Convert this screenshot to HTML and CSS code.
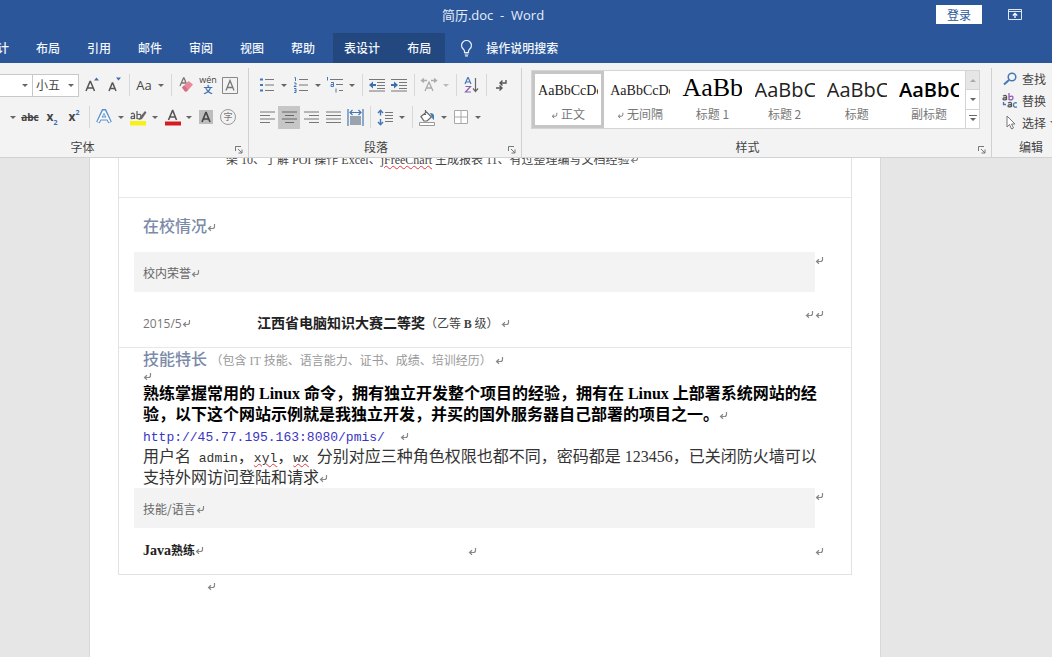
FILE: index.html
```html
<!DOCTYPE html>
<html lang="zh-CN">
<head>
<meta charset="utf-8">
<title>简历.doc - Word</title>
<link rel="stylesheet" href="styles.css">
</head>
<body>
<svg class="defs" aria-hidden="true">
  <symbol id="ret" viewBox="0 0 9 9"><path d="M7.5 1v2.5q0 2-2 2H2M4 3.2L1.500 5.500L4 7.800" fill="none" stroke="currentColor" stroke-width="1.200"/></symbol>
  <symbol id="launch" viewBox="0 0 8 8"><path d="M.5 5V.5H6M3 3l4 4M7 3.500V7H3.500" fill="none" stroke="#777"/></symbol>
</svg>

<header class="titlebar">
  <div class="doc-title">简历.doc&nbsp; -&nbsp; Word</div>
  <button class="login">登录</button>
  <button class="ribbon-opt" aria-label="功能区显示选项"><svg width="14" height="11" viewBox="0 0 14 11"><path d="M.5.5h13v10H.5zM.5 2.500h13" fill="none" stroke="#dfe8f5"/><path d="M7 9V4.500M4.800 6.500L7 4.300l2.200 2.200" fill="none" stroke="#fff" stroke-width="1.300"/></svg></button>
</header>

<nav class="tabs">
  <div class="tab-list">
    <button>设计</button><button>布局</button><button>引用</button><button>邮件</button><button>审阅</button><button>视图</button><button>帮助</button>
  </div>
  <div class="context-tabs"><button>表设计</button><button>布局</button></div>
  <button class="tell-me"><svg width="13" height="17" viewBox="0 0 13 17"><path d="M4.500 12.500V11C4.500 9.500 1.500 8.500 1.500 5.500a5 5 0 0 1 10 0c0 3-3 4-3 5.500v1.500zM4.500 14h4M5 15.800h3" fill="none" stroke="#e6eefa" stroke-width="1.200"/></svg>操作说明搜索</button>
</nav>

<section class="ribbon">
  <div class="group font-group">
    <div class="row">
      <div class="combo font-name"><select aria-label="字体"><option></option></select></div>
      <div class="combo font-size"><select aria-label="字号"><option>小五</option></select></div>
      <button class="tool" aria-label="增大字号"><svg width="16" height="18" viewBox="0 0 16 18"><path d="M2 15L6 5.500h.5L10.500 15M3.500 12h5.500" fill="none" stroke="#555" stroke-width="1.500"/><path d="M10 4.500l2.500-3 2.500 3z" fill="#3b6fb0"/></svg></button>
      <button class="tool" aria-label="减小字号"><svg width="16" height="18" viewBox="0 0 16 18"><path d="M3 15l3.300-8h.4L10 15M4 12.500h5" fill="none" stroke="#555" stroke-width="1.500"/><path d="M10 1.500h5l-2.500 3z" fill="#3b6fb0"/></svg></button>
      <i class="sep"></i>
      <button class="tool aa">Aa</button><button class="drop" aria-label="更改大小写"></button>
      <i class="sep"></i>
      <button class="tool" aria-label="清除格式"><svg width="17" height="18" viewBox="0 0 17 18"><path d="M2 10l3.500-8h.5l2.500 6M3.500 7h4" fill="none" stroke="#777" stroke-width="1.300"/><path d="M4 11.500L10.500 5 15 8.500 9 15.500H7z" fill="#e8899a"/><path d="M4 11.500l2-2 4 4-1.500 2H7z" fill="#d56f85"/></svg></button>
      <button class="tool pinyin" aria-label="拼音指南"><span>wén</span><b>文</b></button>
      <button class="tool" aria-label="字符边框"><svg width="16" height="17" viewBox="0 0 16 17"><path d="M.5.5h15v16H.5z" fill="none" stroke="#888"/><path d="M4 13.500L8 3.500l4 10M5.500 10.500h5" fill="none" stroke="#777" stroke-width="1.300"/></svg></button>
    </div>
    <div class="row second">
      <button class="drop" aria-label="下划线"></button>
      <button class="tool strike">abc</button>
      <button class="tool script">x<sub>2</sub></button>
      <button class="tool script">x<sup>2</sup></button>
      <i class="sep"></i>
      <button class="tool" aria-label="文本效果"><svg width="16" height="16" viewBox="0 0 16 16"><path d="M2 13.500L7.300 2h1.400L14 13.500M4.500 9.500h7" fill="none" stroke="#5b8fc9" stroke-width="4"/><path d="M2.200 13.200L7.500 2.500h1L13.800 13.200M4.500 9.500h7" fill="none" stroke="#f7fbff" stroke-width="1.800"/></svg></button><button class="drop" aria-label="文本效果选项"></button>
      <button class="tool highlight" aria-label="突出显示"><svg width="18" height="17" viewBox="0 0 18 17"><path d="M1 12h16v4.500H1z" fill="#f7f119"/><path d="M2 5q3-2 3.500 1v4M5.500 7Q2 7 2 8.800T5.500 9M8 2v8M8 6q4-2 4 1.500T8 9.500" fill="none" stroke="#555" stroke-width="1.200"/><path d="M10 11l1-3 5-6 1.500 1.500L13 10z" fill="#666"/></svg></button><button class="drop" aria-label="突出显示颜色"></button>
      <button class="tool" aria-label="字体颜色"><svg width="17" height="17" viewBox="0 0 17 17"><path d="M1 12.500h16v4H1z" fill="#d61a22"/><path d="M4.500 11l4-9.500h.3L12.500 11M6 8h5.500" fill="none" stroke="#555" stroke-width="1.600"/></svg></button><button class="drop" aria-label="字体颜色选项"></button>
      <button class="tool" aria-label="字符底纹"><svg width="14" height="14" viewBox="0 0 14 14"><path d="M0 0h14v14H0z" fill="#bdbdbd"/><path d="M3 12L6.800 2.500h.4L11 12M4.500 9h5" fill="none" stroke="#444" stroke-width="1.600"/></svg></button>
      <button class="tool" aria-label="带圈字符"><span class="circled">字</span></button>
    </div>
    <div class="caption"><span>字体</span><button aria-label="字体设置"><svg width="8" height="8"><use href="#launch"/></svg></button></div>
  </div>

  <div class="group para-group">
    <div class="row">
      <button class="tool" aria-label="项目符号"><svg width="16" height="16" viewBox="0 0 16 16"><path d="M1 1.500h3v2H1zM1 7h3v2H1zM1 12.500h3v2H1z" fill="#4478b5"/><path d="M6 2.500h9M6 8h9M6 13.500h9" stroke="#777"/></svg></button><button class="drop" aria-label="项目符号选项"></button>
      <button class="tool" aria-label="编号"><svg width="16" height="18" viewBox="0 0 16 18"><path d="M1.500 1.500h1V5M1 7h2v1.500L1 10.500h2.500M1 12.500h2v4H1M1.500 14.500H3" fill="none" stroke="#4478b5"/><path d="M6 3.500h9M6 9h9M6 14.500h9" stroke="#777"/></svg></button><button class="drop" aria-label="编号选项"></button>
      <button class="tool" aria-label="多级列表"><svg width="18" height="18" viewBox="0 0 18 18"><path d="M1.500 1v3.500M5 6.500h2.500v4H5v-2h2M10 12.500v4" fill="none" stroke="#4478b5"/><path d="M4 3.500h13M10 8.500h7M13 14.500h4" stroke="#777"/></svg></button><button class="drop" aria-label="多级列表选项"></button>
      <i class="sep"></i>
      <button class="tool" aria-label="减少缩进"><svg width="18" height="14" viewBox="0 0 18 14"><path d="M1 1.500h16M9 4.500h8M9 7.500h8M9 10.500h8M1 13h16" stroke="#777"/><path d="M1 7l4-3.500V6h3v2H5v2.500z" fill="#3b6fb0"/></svg></button>
      <button class="tool" aria-label="增加缩进"><svg width="18" height="14" viewBox="0 0 18 14"><path d="M1 1.500h16M9 4.500h8M9 7.500h8M9 10.500h8M1 13h16" stroke="#777"/><path d="M8 7L4 3.500V6H1v2h3v2.500z" fill="#3b6fb0"/></svg></button>
      <i class="sep"></i>
      <button class="tool" aria-label="中文版式"><svg width="18" height="16" viewBox="0 0 18 16"><path d="M5 14l4-9 4 9M6.500 11h5M2 3.500h5M11 3.500h5M4 1.500l-2.500 2L4 5.500M14 1.500l2.500 2-2.500 2" fill="none" stroke="#aaa" stroke-width="1.300"/></svg></button><button class="drop faint" aria-label="中文版式选项"></button>
      <i class="sep"></i>
      <button class="tool" aria-label="排序"><svg width="16" height="18" viewBox="0 0 16 18"><path d="M2 8l2.800-6.500h.4L8 8M3 6h4" fill="none" stroke="#4478b5" stroke-width="1.200"/><path d="M2.500 10.500h5l-5 5.500H8" fill="none" stroke="#8b5fb0" stroke-width="1.200"/><path d="M12.500 2v13M10 12.500l2.500 3 2.500-3" fill="none" stroke="#666" stroke-width="1.200"/></svg></button>
      <i class="sep"></i>
      <button class="tool" aria-label="显示编辑标记"><svg width="14" height="15" viewBox="0 0 14 15"><path d="M12 2v3H6M8.500 2.500L6 5l2.500 2.500M2 10h6M5.500 7.500L8 10l-2.500 2.500" fill="none" stroke="#555" stroke-width="1.400"/></svg></button>
    </div>
    <div class="row second">
      <button class="tool" aria-label="左对齐"><svg width="15" height="12" viewBox="0 0 15 12"><path d="M0 1h15M0 4.500h10M0 8h15M0 11.500h10" stroke="#777"/></svg></button>
      <button class="tool active" aria-label="居中"><svg width="15" height="12" viewBox="0 0 15 12"><path d="M0 1h15M3 4.500h9M0 8h15M3 11.500h9" stroke="#666"/></svg></button>
      <button class="tool" aria-label="右对齐"><svg width="15" height="12" viewBox="0 0 15 12"><path d="M0 1h15M5 4.500h10M0 8h15M5 11.500h10" stroke="#777"/></svg></button>
      <button class="tool" aria-label="两端对齐"><svg width="15" height="12" viewBox="0 0 15 12"><path d="M0 1h15M0 4.500h15M0 8h15M0 11.500h15" stroke="#777"/></svg></button>
      <button class="tool" aria-label="分散对齐"><svg width="17" height="17" viewBox="0 0 17 17"><path d="M1 0v17M16 0v17M3 3.500h11M5.500 1L3 3.500 5.500 6M11.500 1L14 3.500 11.500 6" fill="none" stroke="#4478b5" stroke-width="1.200"/><path d="M3 7h11v9H3z" fill="#9aa3ad"/></svg></button>
      <i class="sep"></i>
      <button class="tool" aria-label="行距"><svg width="16" height="17" viewBox="0 0 16 17"><path d="M3.500 1.500v5M3.500 10v5.500M1 4l2.500-2.700L6 4M1 13l2.500 2.700L6 13" fill="none" stroke="#4478b5" stroke-width="1.400"/><path d="M8 3.500h8M8 6.500h8M8 9.500h8M8 12.500h8" stroke="#777"/></svg></button><button class="drop" aria-label="行距选项"></button>
      <i class="sep"></i>
      <button class="tool" aria-label="底纹"><svg width="18" height="17" viewBox="0 0 18 17"><path d="M1.500 13.500h15v3h-15z" fill="#fff" stroke="#999"/><path d="M3 7.500L8.500 3l5 5L9 12H6zM7.500 6V1" fill="#fff" stroke="#666" stroke-width="1.200"/><path d="M12 4q4 0 4 3v4q-2-1-2-3z" fill="#4478b5"/></svg></button><button class="drop" aria-label="底纹选项"></button>
      <button class="tool" aria-label="边框"><svg width="14" height="14" viewBox="0 0 14 14"><path d="M.5.5h13v13H.5zM7 .5v13M.5 7h13" fill="#fff" stroke="#a8a8a8"/></svg></button><button class="drop" aria-label="边框选项"></button>
    </div>
    <div class="caption"><span>段落</span><button aria-label="段落设置"><svg width="8" height="8"><use href="#launch"/></svg></button></div>
  </div>

  <div class="group style-group">
    <div class="gallery">
      <button class="style on"><span class="sample song">AaBbCcDd</span><span class="name"><svg width="7" height="7"><use href="#ret"/></svg> 正文</span></button>
      <button class="style"><span class="sample song">AaBbCcDd</span><span class="name"><svg width="7" height="7"><use href="#ret"/></svg> 无间隔</span></button>
      <button class="style"><span class="sample h1">AaBb</span><span class="name">标题 1</span></button>
      <button class="style"><span class="sample h2">AaBbC</span><span class="name">标题 2</span></button>
      <button class="style"><span class="sample h2">AaBbC</span><span class="name">标题</span></button>
      <button class="style"><span class="sample h2 bold">AaBbC</span><span class="name">副标题</span></button>
      <div class="scroller">
        <button class="off" aria-label="上一行"><svg width="6" height="3"><path d="M0 3l3-3 3 3z" fill="#aaa"/></svg></button>
        <button aria-label="下一行"><svg width="6" height="3"><path d="M0 0h6L3 3z" fill="#666"/></svg></button>
        <button aria-label="更多样式"><svg width="8" height="7"><path d="M0 0h8v1H0zM1 3h6L4 6z" fill="#666"/></svg></button>
      </div>
    </div>
    <div class="caption"><span>样式</span><button aria-label="样式窗格"><svg width="8" height="8"><use href="#launch"/></svg></button></div>
  </div>

  <div class="group edit-group">
    <button class="cmd"><svg width="14" height="14" viewBox="0 0 14 14"><circle cx="9" cy="5" r="3.800" fill="none" stroke="#4478b5" stroke-width="1.500"/><path d="M6 8l-5 4.500" stroke="#4478b5" stroke-width="2"/></svg>查找</button>
    <button class="cmd"><svg width="16" height="16" viewBox="0 0 16 16"><g fill="none" stroke-width="1.300"><path d="M1 3q3-1.500 3.500.5V7M4.500 4.800Q1 4.500 1 6t3.500.3" stroke="#555"/><path d="M7 0v7M7 4q4-2 4 .8T7 6.500" stroke="#8b5fb0"/><path d="M6 10q3-1.500 3.500.5V14M9.500 11.800Q6 11.500 6 13t3.500.3" stroke="#555"/><path d="M15 10q-3.500-1-3.500 2t3.500 1.800M1.500 9v2.500H4" stroke="#4478b5"/></g></svg>替换</button>
    <button class="cmd"><svg width="14" height="15" viewBox="0 0 14 15"><path d="M4 1v11l2.500-2.500L8.500 14l2-1-2-4H12z" fill="#fff" stroke="#777"/></svg>选择<i class="caret"></i></button>
    <div class="caption"><span>编辑</span></div>
  </div>
</section>

<main class="workspace">
  <article class="page">
    <div class="frame">
      <section class="block tail">
        <p>架 10、了解 POI 操作 Excel、<span class="typo">jFreeChart</span> 生成报表 11、有过整理编写文档经验<svg class="mark"><use href="#ret"/></svg></p>
      </section>
      <section class="block school">
        <h2>在校情况<svg class="mark"><use href="#ret"/></svg></h2>
        <div class="band-row"><div class="band">校内荣誉<svg class="mark"><use href="#ret"/></svg></div><svg class="mark end"><use href="#ret"/></svg></div>
        <div class="award">
          <span class="date">2015/5<svg class="mark"><use href="#ret"/></svg></span>
          <span class="prize"><b>江西省电脑知识大赛二等奖</b>（乙等 <strong>B</strong> 级） <svg class="mark"><use href="#ret"/></svg></span>
          <span class="pair"><svg class="mark"><use href="#ret"/></svg><svg class="mark"><use href="#ret"/></svg></span>
        </div>
      </section>
      <section class="block skills">
        <h2>技能特长 <small>（包含 IT 技能、语言能力、证书、成绩、培训经历） <svg class="mark"><use href="#ret"/></svg></small></h2>
        <p class="blank"><svg class="mark"><use href="#ret"/></svg></p>
        <p class="lead">熟练掌握常用的 Linux 命令，拥有独立开发整个项目的经验，拥有在 Linux 上部署系统网站的经<br>验，以下这个网站示例就是我独立开发，并买的国外服务器自己部署的项目之一。<svg class="mark"><use href="#ret"/></svg></p>
        <p><a class="mono" href="http://45.77.195.163:8080/pmis/">http://45.77.195.163:8080/pmis/</a><span class="mono">  </span><svg class="mark"><use href="#ret"/></svg></p>
        <p>用户名<span class="mono"> admin</span>，<span class="mono typo">xyl</span>，<span class="mono typo">wx</span><span class="mono"> </span>分别对应三种角色权限也都不同，密码都是 123456，已关闭防火墙可以<br>支持外网访问登陆和请求<svg class="mark"><use href="#ret"/></svg></p>
        <div class="band-row"><div class="band">技能/语言<svg class="mark"><use href="#ret"/></svg></div><svg class="mark end"><use href="#ret"/></svg></div>
        <div class="lang"><b>Java<span>熟练</span><svg class="mark"><use href="#ret"/></svg></b><svg class="mark"><use href="#ret"/></svg><svg class="mark"><use href="#ret"/></svg></div>
      </section>
    </div>
    <p class="after"><svg class="mark"><use href="#ret"/></svg></p>
  </article>
</main>
</body>
</html>
```
FILE: styles.css
```css
* { box-sizing: border-box; }
body {
  margin: 0;
  height: 100vh;
  display: flex;
  flex-direction: column;
  overflow: hidden;
  background: #e6e6e6;
  color: #444;
  font: 12px/16px "Noto Sans CJK SC", sans-serif;
  white-space: nowrap;
}
button, select {
  margin: 0;
  padding: 0;
  border: 0;
  background: none;
  color: inherit;
  font: inherit;
}
button svg { flex: none; }
p, h2 { margin: 0; }
.defs { display: none; }

/* title bar and tabs */
.titlebar {
  flex: none;
  height: 33px;
  display: flex;
  align-items: center;
  padding: 0 30px 4px 0;
  background: #2b579a;
  color: #fff;
}
.doc-title {
  flex: 1;
  padding-left: 50px;
  text-align: center;
  font-family: "Open Sans", "Noto Sans CJK SC", sans-serif;
  font-size: 13px;
  color: #e6eefa;
}
.login {
  width: 46px;
  height: 19px;
  margin-right: 26px;
  background: #fff;
  color: #2b579a;
}
.ribbon-opt { display: flex; }
.tabs {
  flex: none;
  height: 30px;
  display: flex;
  background: #2b579a;
  color: #f2f6fc;
  font-weight: 500;
}
.tab-list { display: flex; gap: 27px; margin-left: -15px; padding-right: 18px; }
.context-tabs { display: flex; gap: 27px; padding: 0 14px 0 11px; background: #23477f; }
.tell-me { display: flex; align-items: center; gap: 13px; padding-left: 15px; }

/* ribbon */
.ribbon {
  flex: none;
  height: 95px;
  display: flex;
  padding-top: 5px;
  border-bottom: 1px solid #d2d2d2;
  background: #f3f3f3;
}
.group { display: flex; flex-direction: column; border-right: 1px solid #d0d0d0; }
.row { display: flex; align-items: center; height: 34px; }
.row.second { height: 30px; }
.font-group { margin-left: -65px; width: 314px; flex: none; }
.font-group .row { padding-left: 65px; }
.font-group .row.second { padding-left: 72px; }
.para-group { width: 273px; flex: none; }
.para-group .row { padding-left: 7px; }
.style-group { width: 470px; flex: none; padding-left: 9px; }
.edit-group { flex: 1; min-width: 60px; border: 0; padding-left: 11px; }
.caption { display: flex; align-items: center; height: 24px; margin-top: auto; padding-top: 4px; }
.caption span { flex: 1; text-align: center; }
.caption button { width: 18px; display: flex; padding: 5px 0 0 5px; }
.style-group .caption { margin-left: -9px; }
.edit-group .caption span { text-align: left; padding-left: 16px; }

.tool { width: 22px; height: 23px; display: flex; align-items: center; justify-content: center; }
.tool.active { background: #c6c6c6; }
.drop { width: 12px; height: 23px; display: flex; align-items: center; justify-content: center; }
.drop::before, .combo::after, .caret {
  content: "";
  border: 3px solid transparent;
  border-top-color: #666;
  border-bottom: 0;
}
.drop.faint::before { border-top-color: #bbb; }
.sep { width: 8px; height: 22px; display: flex; justify-content: center; }
.sep::before { content: ""; width: 1px; background: #d8d8d8; }
.combo {
  display: flex;
  align-items: center;
  height: 23px;
  padding-right: 4px;
  border: 1px solid #c8c8c8;
  background: #fff;
}
.combo select { flex: 1; min-width: 0; height: 21px; appearance: none; padding-left: 3px; }
.font-name { width: 33px; margin-right: -1px; border-left: 0; }
.font-size { width: 47px; margin-right: 2px; }
.aa { font: 13px "Open Sans", sans-serif; }
.pinyin { flex-direction: column; }
.pinyin span { font: 9px/10px "Open Sans", sans-serif; }
.pinyin b { font-size: 9px; line-height: 10px; color: #3b6fb0; }
.strike { font: bold 10px "Open Sans", sans-serif; text-decoration: line-through; }
.script { font: bold 12px/12px "Open Sans", sans-serif; }
.script sub, .script sup { font-size: 7px; line-height: 7px; color: #3b6fb0; }
.script sub { align-self: flex-end; padding-bottom: 3px; }
.script sup { align-self: flex-start; padding-top: 3px; }
.circled {
  width: 16px;
  height: 16px;
  border: 1px solid #999;
  border-radius: 50%;
  font-size: 9px;
  line-height: 14px;
  color: #777;
}

.gallery {
  display: flex;
  height: 59px;
  margin: 2px 11px 0 0;
  border: 1px solid #d4d4d4;
  background: #fff;
}
.style {
  flex: 1;
  display: flex;
  flex-direction: column;
  align-items: center;
  border: 3px solid transparent;
}
.style.on { border-color: #c6c6c6; }
.sample {
  width: 60px;
  height: 32px;
  overflow: hidden;
  text-align: left;
  line-height: 34px;
  color: #222;
}
.song { font-family: "Liberation Serif", serif; font-size: 14px; }
.h1 { font-family: "Liberation Serif", serif; font-size: 26px; line-height: 28px; color: #000; }
.h2 { font-family: "Open Sans", sans-serif; font-size: 20px; line-height: 32px; }
.h2.bold { font-weight: 600; color: #000; }
.name { color: #777; }
.scroller { width: 14px; display: flex; flex-direction: column; border-left: 1px solid #d4d4d4; }
.scroller button { flex: 1; display: flex; align-items: center; justify-content: center; }
.scroller button + button { border-top: 1px solid #d4d4d4; }
.scroller .off { background: #e6e6e6; }
.cmd { display: flex; align-items: center; gap: 4px; height: 23px; }
.cmd svg { width: 16px; }
.edit-group .cmd { margin-left: -1px; }

/* document */
.workspace { flex: 1; min-height: 0; overflow: hidden; }
.page {
  width: 792px;
  min-height: 100%;
  margin-left: 89px;
  padding: 0 28px;
  border: 1px solid #d8d8d8;
  border-width: 0 1px;
  background: #fff;
}
.frame { border: 1px solid #e2e2e2; border-top: 0; }
.block { padding: 0 25px 0 24px; }
.block + .block { border-top: 1px solid #e8e8e8; }
.mark { width: 9px; height: 9px; color: #888; }
.tail { display: flow-root; padding-bottom: 29px; }
.tail p { margin: -6px 0 0 83px; font-family: "Liberation Serif", "Noto Sans CJK SC", serif; }
.typo { text-decoration: underline wavy #e0393e 1px; text-underline-offset: 1px; }
h2 { font-size: 16px; line-height: 24px; font-weight: 500; color: #7c8aa8; }
.school h2 { padding-top: 15px; margin-bottom: 15px; }
.band-row { display: flex; margin: 0 2px 0 -9px; }
.band {
  flex: 1;
  height: 40px;
  padding-left: 9px;
  background: #f3f3f3;
  font-family: "Noto Sans CJK SC", sans-serif;
  font-size: 12px;
  line-height: 42px;
  color: #666;
}
.end { margin-top: 4px; }
.award { display: flex; height: 55px; padding-top: 18px; line-height: 24px; }
.date { width: 114px; font: 12px/28px "Open Sans", sans-serif; color: #777; }
.prize { flex: 1; }
.prize b { font-size: 14px; color: #222; }
.prize strong { font-family: "Liberation Serif", serif; }
.pair { display: flex; gap: 1px; margin-right: 2px; }
.skills { font: 16px/21px "Liberation Serif", "Noto Sans CJK SC", serif; color: #333; }
.skills h2 { font-family: "Noto Sans CJK SC", sans-serif; line-height: 21px; }
.skills small { font: 12px/16px "Liberation Serif", "Noto Sans CJK SC", serif; color: #999; }
.blank { display: flex; height: 14px; align-items: center; }
.lead { font-weight: bold; color: #000; }
.mono { font-family: "Liberation Mono", monospace; font-size: 13px; line-height: 16px; white-space: pre; }
a { color: #3a34c4; text-decoration: none; }
.lang {
  display: flex;
  align-items: center;
  justify-content: space-between;
  height: 46px;
  margin-right: 2px;
  font-size: 14px;
}
.lang b { width: 62px; color: #222; }
.lang span { font-size: 12px; }
.lang > :nth-child(2) { margin-right: 76px; }
.after { padding-left: 89px; line-height: 22px; }
```
